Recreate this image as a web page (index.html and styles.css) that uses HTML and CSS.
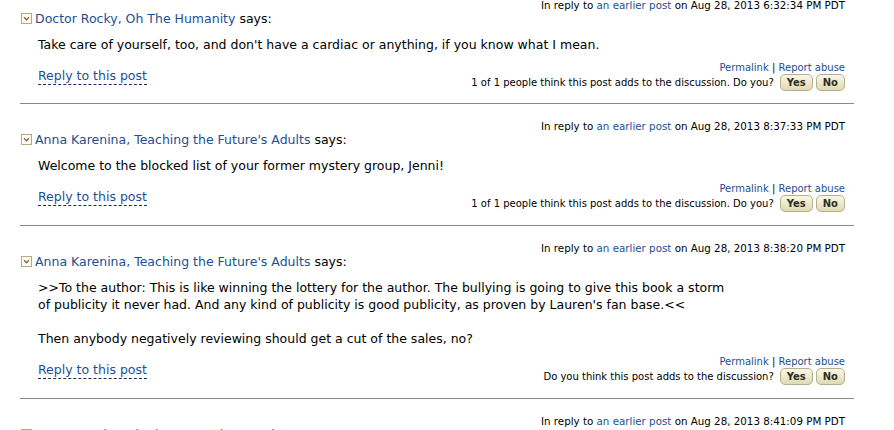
FILE: index.html
```html
<!DOCTYPE html>
<html lang="en">
<head>
    <meta charset="utf-8">
    <title>Customer Discussions</title>
    <link rel="stylesheet" href="styles.css">
</head>
<body>
    <div class="thread">
        <div class="post">
            <div class="post-meta">In reply to <a href="#">an earlier post</a> on Aug 28, 2013 6:32:34 PM PDT</div>
            <div class="post-head">
                <span class="toggle"><svg width="11" height="11" viewBox="0 0 11 11"><rect x="0.5" y="0.5" width="10" height="10" fill="#fdfbf2" stroke="#b9a67c"/><path d="M3 4.2 L5.5 6.8 L8 4.2" fill="none" stroke="#8a6a2a" stroke-width="1.3"/></svg></span><a href="#" class="author">Doctor Rocky, Oh The Humanity</a> says:
            </div>
            <div class="post-body">Take care of yourself, too, and don't have a cardiac or anything, if you know what I mean.</div>
            <div class="post-foot">
                <a href="#" class="reply">Reply to this post</a>
                <div class="post-tools">
                    <div class="tool-links"><a href="#">Permalink</a> | <a href="#">Report abuse</a></div>
                    <div class="vote"><span>1 of 1 people think this post adds to the discussion. Do you?</span><button>Yes</button><button>No</button></div>
                </div>
            </div>
        </div>

        <div class="post">
            <div class="post-meta">In reply to <a href="#">an earlier post</a> on Aug 28, 2013 8:37:33 PM PDT</div>
            <div class="post-head">
                <span class="toggle"><svg width="11" height="11" viewBox="0 0 11 11"><rect x="0.5" y="0.5" width="10" height="10" fill="#fdfbf2" stroke="#b9a67c"/><path d="M3 4.2 L5.5 6.8 L8 4.2" fill="none" stroke="#8a6a2a" stroke-width="1.3"/></svg></span><a href="#" class="author">Anna Karenina, Teaching the Future's Adults</a> says:
            </div>
            <div class="post-body">Welcome to the blocked list of your former mystery group, Jenni!</div>
            <div class="post-foot">
                <a href="#" class="reply">Reply to this post</a>
                <div class="post-tools">
                    <div class="tool-links"><a href="#">Permalink</a> | <a href="#">Report abuse</a></div>
                    <div class="vote"><span>1 of 1 people think this post adds to the discussion. Do you?</span><button>Yes</button><button>No</button></div>
                </div>
            </div>
        </div>

        <div class="post">
            <div class="post-meta">In reply to <a href="#">an earlier post</a> on Aug 28, 2013 8:38:20 PM PDT</div>
            <div class="post-head">
                <span class="toggle"><svg width="11" height="11" viewBox="0 0 11 11"><rect x="0.5" y="0.5" width="10" height="10" fill="#fdfbf2" stroke="#b9a67c"/><path d="M3 4.2 L5.5 6.8 L8 4.2" fill="none" stroke="#8a6a2a" stroke-width="1.3"/></svg></span><a href="#" class="author">Anna Karenina, Teaching the Future's Adults</a> says:
            </div>
            <div class="post-body">&gt;&gt;To the author: This is like winning the lottery for the author. The bullying is going to give this book a storm<br>of publicity it never had. And any kind of publicity is good publicity, as proven by Lauren's fan base.&lt;&lt;<br><br>Then anybody negatively reviewing should get a cut of the sales, no?</div>
            <div class="post-foot">
                <a href="#" class="reply">Reply to this post</a>
                <div class="post-tools">
                    <div class="tool-links"><a href="#">Permalink</a> | <a href="#">Report abuse</a></div>
                    <div class="vote"><span>Do you think this post adds to the discussion?</span><button>Yes</button><button>No</button></div>
                </div>
            </div>
        </div>

        <div class="post">
            <div class="post-meta">In reply to <a href="#">an earlier post</a> on Aug 28, 2013 8:41:09 PM PDT</div>
            <div class="post-head">
                <span class="toggle"><svg width="11" height="11" viewBox="0 0 11 11"><rect x="0.5" y="0.5" width="10" height="10" fill="#fdfbf2" stroke="#b9a67c"/><path d="M3 4.2 L5.5 6.8 L8 4.2" fill="none" stroke="#8a6a2a" stroke-width="1.3"/></svg></span><a href="#" class="author">Doctor Rocky, Oh The Humanity, Reader</a> says:
            </div>
        </div>
    </div>
</body>
</html>
```

FILE: styles.css
```css
body {
    margin: 0;
    padding: 0;
    background-color: #ffffff;
    color: #000000;
    font-family: "DejaVu Sans", sans-serif;
    overflow: hidden;
}

a {
    color: #1d4f93;
    text-decoration: none;
}

.thread {
    width: 834px;
    margin-left: 20px;
    margin-top: -17px;
}

.post {
    padding: 17px 9px 13px 0;
    border-bottom: 1px solid #8a8a8a;
}

.post:first-child {
    padding-bottom: 12px;
}

.post:last-child {
    border-bottom: none;
}

.post-meta {
    text-align: right;
    font-size: 10.3px;
    line-height: 11px;
}

.post-head {
    font-size: 12.5px;
    line-height: 16px;
}

.toggle {
    display: inline-block;
    width: 11px;
    height: 11px;
    margin: 0 3px 0 1px;
    vertical-align: -1px;
}

.toggle svg {
    display: block;
}

.post-body {
    margin: 9px 0 0 18px;
    font-size: 12.5px;
    line-height: 17px;
}

.post-foot {
    display: flex;
    align-items: center;
    justify-content: space-between;
    margin: 9px 0 0 18px;
}

.reply {
    font-size: 12.5px;
    line-height: 16px;
    border-bottom: 1px dashed #1b2f5c;
}

.post-tools {
    text-align: right;
    font-size: 10px;
}

.tool-links {
    line-height: 12px;
}

.vote {
    display: flex;
    align-items: center;
    justify-content: flex-end;
    height: 17px;
}

.vote span {
    margin-right: 3px;
}

.vote button {
    height: 17px;
    margin-left: 3px;
    padding: 0 6px;
    font-family: "DejaVu Sans", sans-serif;
    font-size: 10px;
    font-weight: bold;
    color: #2e2e22;
    background: linear-gradient(#faf8e6, #dedab4);
    border: 1px solid #b4b08c;
    border-radius: 5px;
}
```
